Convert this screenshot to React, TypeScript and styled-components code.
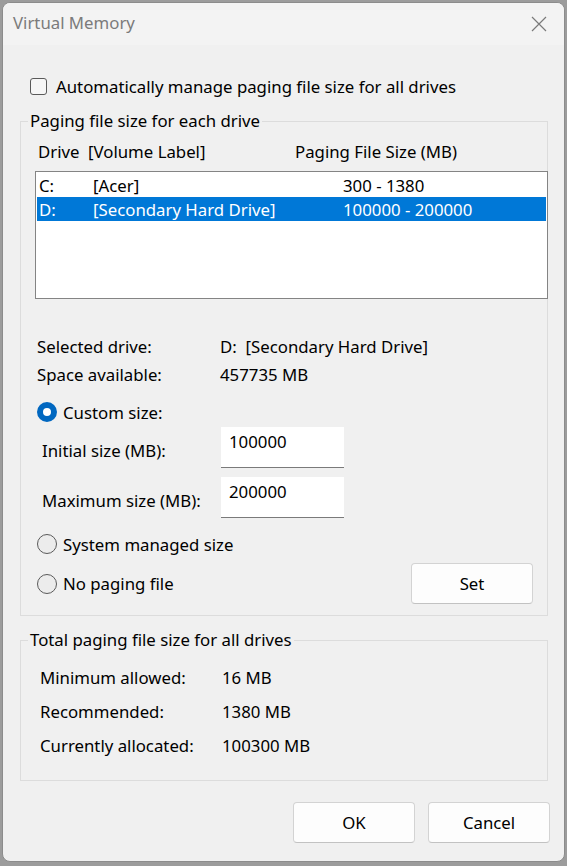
import React, { useState } from "react";
import styled, { createGlobalStyle } from "styled-components";

const GlobalStyle = createGlobalStyle`
  html, body {
    margin: 0;
    padding: 0;
    background: #9c9c9c;
  }
  body {
    font-family: "Noto Sans", "Open Sans", sans-serif;
    font-size: 16.8px;
    color: #000;
  }
`;

const drives = [
  { letter: "C:", label: "[Acer]", size: "300 - 1380" },
  { letter: "D:", label: "[Secondary Hard Drive]", size: "100000 - 200000" },
];

const totals = [
  { label: "Minimum allowed:", value: "16 MB" },
  { label: "Recommended:", value: "1380 MB" },
  { label: "Currently allocated:", value: "100300 MB" },
];

const App = () => {
  const [selected, setSelected] = useState(1);
  const [mode, setMode] = useState("custom");
  const [auto, setAuto] = useState(false);

  return (
    <>
      <GlobalStyle />
      <Window>
        <TitleBar>
          <Title>Virtual Memory</Title>
          <CloseButton aria-label="Close">
            <svg width="16" height="16" viewBox="0 0 16 16">
              <path d="M1 1 L15 15 M15 1 L1 15" stroke="#7a7a7a" strokeWidth="1.2" fill="none" />
            </svg>
          </CloseButton>
        </TitleBar>

        <Body>
          <CheckRow onClick={() => setAuto(!auto)}>
            <CheckBox $checked={auto} />
            Automatically manage paging file size for all drives
          </CheckRow>

          <Group $top={12} $bottom={11}>
            <Legend>Paging file size for each drive</Legend>
            <ListHeader>
              <span>Drive</span>
              <span>[Volume Label]</span>
              <span>Paging File Size (MB)</span>
            </ListHeader>
            <DriveList>
              {drives.map((d, i) => (
                <DriveRow key={d.letter} $selected={selected === i} onClick={() => setSelected(i)}>
                  <span>{d.letter}</span>
                  <span>{d.label}</span>
                  <span>{d.size}</span>
                </DriveRow>
              ))}
            </DriveList>

            <InfoGrid>
              <span>Selected drive:</span>
              <span>
                {drives[selected].letter}&nbsp; {drives[selected].label}
              </span>
              <span>Space available:</span>
              <span>457735 MB</span>
            </InfoGrid>

            <RadioRow $top={11} onClick={() => setMode("custom")}>
              <Radio $checked={mode === "custom"} />
              Custom size:
            </RadioRow>
            <SizeRow $top={2}>
              <SizeLabel>Initial size (MB):</SizeLabel>
              <SizeInput defaultValue="100000" />
            </SizeRow>
            <SizeRow $top={9}>
              <SizeLabel>Maximum size (MB):</SizeLabel>
              <SizeInput defaultValue="200000" />
            </SizeRow>
            <RadioRow $top={13} onClick={() => setMode("system")}>
              <Radio $checked={mode === "system"} />
              System managed size
            </RadioRow>
            <LastRow>
              <RadioRow $top={0} onClick={() => setMode("none")}>
                <Radio $checked={mode === "none"} />
                No paging file
              </RadioRow>
              <Button>Set</Button>
            </LastRow>
          </Group>

          <Group $top={13} $bottom={18}>
            <Legend>Total paging file size for all drives</Legend>
            <TotalsGrid>
              {totals.map((t) => (
                <React.Fragment key={t.label}>
                  <span>{t.label}</span>
                  <span>{t.value}</span>
                </React.Fragment>
              ))}
            </TotalsGrid>
          </Group>

          <Footer>
            <Button>OK</Button>
            <Button>Cancel</Button>
          </Footer>
        </Body>
      </Window>
    </>
  );
};

export default App;

const Window = styled.div`
  margin: 2px 0 0 2px;
  width: 563px;
  height: 860px;
  box-sizing: border-box;
  border: 1px solid #8c8c8c;
  border-radius: 8px;
  background: #f0f0f0;
  overflow: hidden;
  display: flex;
  flex-direction: column;
`;

const TitleBar = styled.div`
  height: 42px;
  box-sizing: border-box;
  background: #f3f3f3;
  display: flex;
  align-items: center;
  justify-content: space-between;
  padding: 0 17px 3px 10px;
`;

const Title = styled.div`
  color: #7b7b7b;
`;

const CloseButton = styled.div`
  width: 16px;
  height: 16px;
  display: flex;
  margin-top: 3px;
`;

const Body = styled.div`
  display: flex;
  flex-direction: column;
  padding: 0 16px 0 17px;
`;

const CheckRow = styled.label`
  display: flex;
  align-items: center;
  gap: 9px;
  height: 24px;
  margin: 29px 0 0 10px;
  cursor: default;
`;

const CheckBox = styled.span<{ $checked: boolean }>`
  width: 15px;
  height: 15px;
  border: 1px solid #5a5a5a;
  border-radius: 3px;
  background: ${(p) => (p.$checked ? "#0067c0" : "#f6f6f6")};
`;

const Group = styled.fieldset<{ $top?: number; $bottom?: number }>`
  margin: ${(p) => p.$top ?? 14}px 0 0 0;
  padding: 0 0 ${(p) => p.$bottom ?? 10}px 14px;
  border: 1px solid #dcdcdc;
  min-width: 0;
`;

const Legend = styled.legend`
  margin-left: -7px;
  padding: 0 2px;
  line-height: 22px;
`;

const ListHeader = styled.div`
  display: grid;
  grid-template-columns: 50px 207px auto;
  padding: 9px 0 0 3px;
  line-height: 22px;
`;

const DriveList = styled.div`
  margin-top: 8px;
  height: 128px;
  box-sizing: border-box;
  border: 1px solid #848484;
  background: #fff;
  padding: 1px 1px 0 1px;
  margin-right: -1px;
`;

const DriveRow = styled.div<{ $selected: boolean }>`
  display: grid;
  grid-template-columns: 54px 250px auto;
  height: 24px;
  align-items: center;
  padding-left: 2px;
  background: ${(p) => (p.$selected ? "#0078d7" : "transparent")};
  color: ${(p) => (p.$selected ? "#fff" : "#000")};
`;

const InfoGrid = styled.div`
  display: grid;
  grid-template-columns: 183px auto;
  grid-auto-rows: 28px;
  align-items: center;
  margin-top: 33px;
  padding-left: 2px;
`;

const RadioRow = styled.label<{ $top: number }>`
  display: flex;
  align-items: center;
  gap: 6px;
  height: 26px;
  margin-top: ${(p) => p.$top}px;
  padding-left: 2px;
  cursor: default;
`;

const Radio = styled.span<{ $checked: boolean }>`
  width: 20px;
  height: 20px;
  box-sizing: border-box;
  border-radius: 50%;
  border: ${(p) => (p.$checked ? "6px solid #0067c0" : "1px solid #5a5a5a")};
  background: ${(p) => (p.$checked ? "#fff" : "#ececec")};
`;

const SizeRow = styled.div<{ $top: number }>`
  display: flex;
  align-items: center;
  margin-top: ${(p) => p.$top}px;
  padding-left: 7px;
`;

const SizeLabel = styled.span`
  width: 179px;
  padding-top: 5px;
`;

const SizeInput = styled.input`
  width: 123px;
  height: 41px;
  box-sizing: border-box;
  border: none;
  border-bottom: 1px solid #7a7a7a;
  background: #fff;
  font: inherit;
  padding: 0 0 12px 8px;
  outline: none;
`;

const LastRow = styled.div`
  display: flex;
  align-items: center;
  justify-content: space-between;
  margin-top: 6px;
  padding-right: 14px;
`;

const Button = styled.button`
  width: 122px;
  height: 41px;
  box-sizing: border-box;
  border: 1px solid #d3d3d3;
  border-bottom-color: #c2c2c2;
  border-radius: 4px;
  background: #fdfdfd;
  font: inherit;
  color: #000;
`;

const TotalsGrid = styled.div`
  display: grid;
  grid-template-columns: 182px auto;
  grid-auto-rows: 34px;
  align-items: center;
  padding: 9px 0 0 5px;
`;

const Footer = styled.div`
  display: flex;
  justify-content: flex-end;
  gap: 13px;
  margin-top: 21px;
  margin-right: -2px;
`;
